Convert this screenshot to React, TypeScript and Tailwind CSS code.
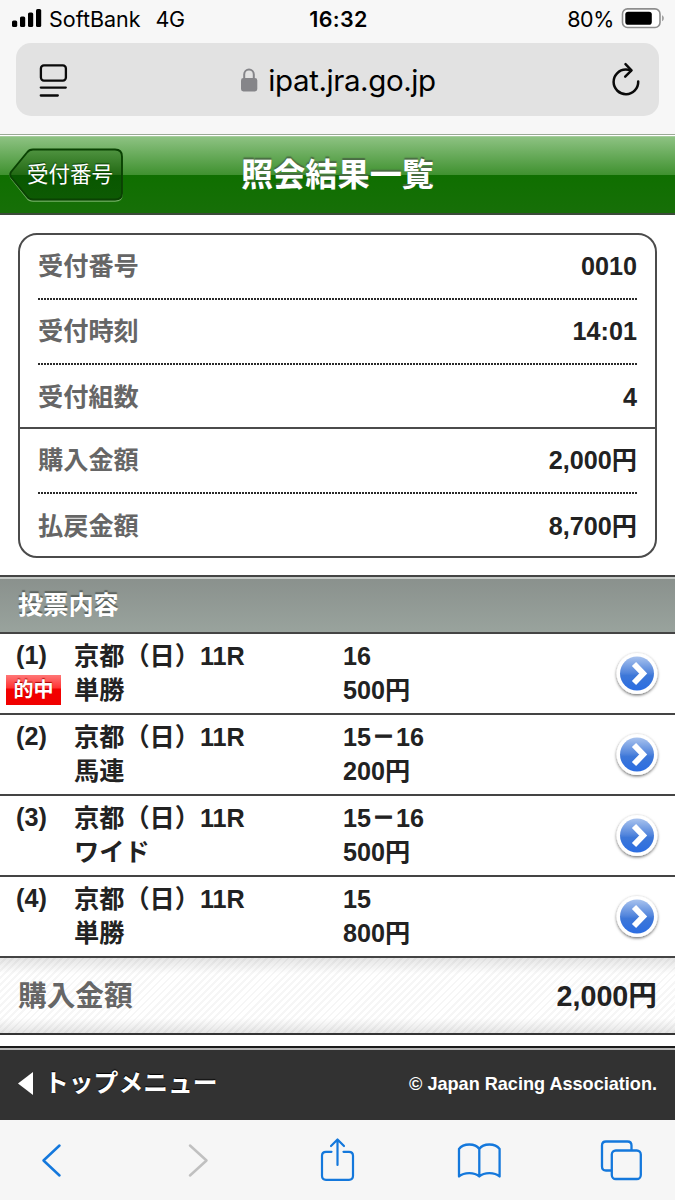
import type { ReactNode } from 'react'

type Bet = {
  no: number
  race: string
  kind: string
  pick: string[]
  amount: string
  hit?: boolean
}

const receipt = [
  { label: '受付番号', value: '0010' },
  { label: '受付時刻', value: '14:01' },
  { label: '受付組数', value: '4' },
]

const money = [
  { label: '購入金額', value: '2,000円' },
  { label: '払戻金額', value: '8,700円' },
]

const bets: Bet[] = [
  { no: 1, race: '京都（日）11R', kind: '単勝', pick: ['16'], amount: '500円', hit: true },
  { no: 2, race: '京都（日）11R', kind: '馬連', pick: ['15', '16'], amount: '200円' },
  { no: 3, race: '京都（日）11R', kind: 'ワイド', pick: ['15', '16'], amount: '500円' },
  { no: 4, race: '京都（日）11R', kind: '単勝', pick: ['15'], amount: '800円' },
]

function StatusBar() {
  return (
    <div className="grid h-[43px] grid-cols-[1fr_auto_1fr] items-center pr-[10px] pb-[6px] pl-3 font-['Inter',sans-serif] text-[21.5px] leading-6 text-black">
      <div className="flex items-center">
        <svg className="mr-[7px] h-5 w-[30px]" viewBox="0 0 30 20" aria-hidden>
          <rect x="0" y="11.5" width="5.2" height="6.5" rx="1.6" />
          <rect x="8" y="7.5" width="5.2" height="10.5" rx="1.6" />
          <rect x="16" y="3.5" width="5.2" height="14.5" rx="1.6" />
          <rect x="24" y="0" width="5.2" height="18" rx="1.6" />
        </svg>
        <span>SoftBank</span>
        <span className="ml-[15px] tracking-[-0.5px]">4G</span>
      </div>
      <span className="font-semibold tracking-[0.3px]">16:32</span>
      <div className="flex items-center justify-end">
        <span className="mr-[7px] tracking-[-0.4px]">80%</span>
        <svg className="h-[22px] w-[44px]" viewBox="0 0 44 22" aria-hidden>
          <rect x="1.5" y="0.9" width="37.5" height="18.6" rx="5" fill="#fff" stroke="#8e8e8e" strokeWidth="1.6" />
          <rect x="4.3" y="3.7" width="26.5" height="13" rx="2.8" />
          <path d="M41.2 7.2c2 1 2 5 0 6z" fill="#8e8e8e" />
        </svg>
      </div>
    </div>
  )
}

function AddressBar() {
  return (
    <div className="mx-4 flex h-[73px] items-center justify-between rounded-[15px] bg-[#e2e2e2] pr-[17px] pl-[22px]">
      <svg className="h-[36px] w-[30px]" viewBox="0 0 30 36" fill="none" stroke="#0a0a0a" strokeWidth="2.3" strokeLinecap="round" aria-hidden>
        <rect x="2.9" y="3.4" width="25" height="15.2" rx="3" />
        <path d="M2.8 25.6h25M2.8 33.5h17" />
      </svg>
      <div className="flex items-center">
        <svg className="mr-[10px] -ml-[2px] h-6 w-[18px]" viewBox="0 0 18 24" aria-hidden>
          <path d="M4.2 11V6.4a4.8 4.8 0 0 1 9.6 0V11" fill="none" stroke="#858589" strokeWidth="2" />
          <rect x="1" y="10" width="16.3" height="13.4" rx="2.4" fill="#858589" />
        </svg>
        <span className="font-['Inter',sans-serif] text-[29.5px] leading-9 tracking-[-0.4px] text-black">ipat.jra.go.jp</span>
      </div>
      <svg className="h-[36px] w-[32px]" viewBox="0 0 32 36" fill="none" stroke="#0a0a0a" strokeWidth="2.5" strokeLinecap="round" strokeLinejoin="round" aria-hidden>
        <path d="M28.2 19.5A12.3 12.3 0 1 1 15.8 7.6c2 0 3.6.2 5.2.8" />
        <path d="M15.5 2.2 21.5 8.3 15.2 14.6" />
      </svg>
    </div>
  )
}

function BackButton({ children }: { children: ReactNode }) {
  return (
    <button className="relative ml-[9px] flex h-[56px] w-[115px] items-center pl-[18px]">
      <svg className="absolute inset-0 h-[56px] w-[115px]" viewBox="0 0 115 56" aria-hidden>
        <defs>
          <linearGradient id="back" x1="0" y1="0" x2="0" y2="1">
            <stop offset="0" stopColor="#4f9340" />
            <stop offset="0.5" stopColor="#236a14" />
            <stop offset="0.51" stopColor="#085700" />
            <stop offset="1" stopColor="#0d5a03" />
          </linearGradient>
        </defs>
        <path d="M24 4h82q7 0 7 7v37q0 6-7 6H24q-4 0-6-3L2 31q-1.5-2.500 0-5L18 7q2-3 6-3z" fill="none" stroke="#8cc07e" strokeOpacity=".8" strokeWidth="1.4" />
        <path d="M24 2.500h82q7 0 7 7v37q0 6-7 6H24q-4 0-6-3L2 30q-1.500-2.500 0-5L18 5.500q2-3 6-3z" fill="url(#back)" stroke="#0a4203" strokeWidth="1.9" />
      </svg>
      <span className="relative text-[21.5px] leading-6 text-white [text-shadow:0_-1px_1px_#063c00]">{children}</span>
    </button>
  )
}

function PageHeader() {
  return (
    <header className="h-[81px] border-t border-b-2 border-t-[#9aaa95] border-b-[#3c4a3a] bg-white pt-px">
      <div className="grid h-[77px] grid-cols-[1fr_auto_1fr] items-center border-t border-[#a5cc9c] bg-[linear-gradient(#8dc282_0,#3f912f_38px,#0f6f00_38px,#176f08_100%)]">
        <BackButton>受付番号</BackButton>
        <h1 className="text-[32.2px] leading-10 font-bold text-white [text-shadow:0_-2px_1px_#4a6b44]">照会結果一覧</h1>
      </div>
    </header>
  )
}

function SummaryRow({ label, value }: { label: string; value: string }) {
  return (
    <div className="mx-[18px] flex h-[65px] items-center justify-between bg-[repeating-linear-gradient(90deg,#2a2a2a_0_1.6px,transparent_1.6px_3px)] bg-[length:100%_2px] bg-bottom bg-no-repeat pb-[3px] last:h-[63px] last:bg-none last:pb-0">
      <dt className="text-[#666]">{label}</dt>
      <dd>{value}</dd>
    </div>
  )
}

function Summary() {
  return (
    <div className="mx-[18px] mt-[18px] h-[325px] rounded-[19px] border-2 border-[#4b4b4b] text-[25.2px] leading-[30px] font-bold">
      <dl className="h-[194px] border-b-2 border-[#4b4b4b]">
        {receipt.map((row) => (
          <SummaryRow key={row.label} label={row.label} value={row.value} />
        ))}
      </dl>
      <dl>
        {money.map((row) => (
          <SummaryRow key={row.label} label={row.label} value={row.value} />
        ))}
      </dl>
    </div>
  )
}

function DetailButton() {
  return (
    <svg className="h-[50px] w-[50px]" viewBox="0 0 50 50" aria-label="詳細">
      <defs>
        <linearGradient id="disc" x1="0" y1="0" x2="0" y2="1">
          <stop offset="0" stopColor="#a9c3ee" />
          <stop offset="0.48" stopColor="#5285dc" />
          <stop offset="0.56" stopColor="#3d77d8" />
          <stop offset="1" stopColor="#2b6de2" />
        </linearGradient>
        <filter id="drop" x="-20%" y="-20%" width="140%" height="140%">
          <feDropShadow dx="0" dy="1.2" stdDeviation="1.5" floodColor="#000" floodOpacity=".6" />
        </filter>
      </defs>
      <circle cx="25" cy="24.5" r="20.5" fill="#fff" filter="url(#drop)" />
      <circle cx="25" cy="24.5" r="17" fill="url(#disc)" />
      <path d="M22 14.900 31.200 24.500 22 34.100" fill="none" stroke="#fff" strokeWidth="5.8" />
    </svg>
  )
}

function Pick({ numbers }: { numbers: string[] }) {
  return (
    <span className="flex h-[34px]">
      {numbers.map((n, i) => (
        <span key={n} className="flex">
          {i > 0 && <span className="w-[25px] text-center text-[22px] [-webkit-text-stroke:1.2px_#222]">－</span>}
          {n}
        </span>
      ))}
    </span>
  )
}

function BetRow({ bet }: { bet: Bet }) {
  return (
    <li className="flex h-[81px] items-start border-b-2 border-[#444] pt-[5px] pr-[13px] text-[25.2px] leading-[34px] font-bold">
      <div className="flex w-[74px] flex-col pl-[6px]">
        <span className="h-[34px] pl-[10px] leading-[32px]">({bet.no})</span>
        {bet.hit && (
          <span className="mt-[2px] flex h-[30px] w-[55px] items-center justify-center bg-[linear-gradient(#f77_0,#f33_13px,#f30000_14px,#f00000_100%)] text-[20px] leading-6 text-white [text-shadow:0_-1px_1px_#a00]">
            的中
          </span>
        )}
      </div>
      <div className="flex w-[269px] flex-col">
        <span>{bet.race}</span>
        <span>{bet.kind}</span>
      </div>
      <div className="flex flex-1 flex-col">
        <Pick numbers={bet.pick} />
        <span>{bet.amount}</span>
      </div>
      <div className="pt-[10px]">
        <DetailButton />
      </div>
    </li>
  )
}

function Toolbar() {
  return (
    <nav className="grid h-20 grid-cols-[144px_141px_140px_142px_48px] items-center bg-[#f6f6f6] px-[30px] text-[#1478dc]">
      <svg className="h-[50px] w-[44px]" viewBox="30 1135 44 50" fill="none" stroke="currentColor" strokeWidth="2.5" strokeLinecap="round" strokeLinejoin="round" aria-hidden>
        <path d="M59.5 1145.500 43.500 1160.500 59.500 1175.500" />
      </svg>
      <svg className="h-[50px] w-[44px]" viewBox="174 1135 44 50" fill="none" stroke="#c0c0c0" strokeWidth="2.5" strokeLinecap="round" strokeLinejoin="round" aria-hidden>
        <path d="M190 1145.500 206.500 1160.500 190 1175.500" />
      </svg>
      <svg className="h-[50px] w-[44px]" viewBox="315 1135 44 50" fill="none" stroke="currentColor" strokeWidth="2.2" strokeLinecap="round" strokeLinejoin="round" aria-hidden>
        <path d="M331.500 1151.800H326q-4 0-4 4v20q0 4 4 4h23q4 0 4-4v-20q0-4-4-4h-5.500M337.500 1165v-25M331 1146l6.500-6.500 6.500 6.500" />
      </svg>
      <svg className="h-[50px] w-[48px]" viewBox="455 1135 48 50" fill="none" stroke="currentColor" strokeWidth="2.3" strokeLinecap="round" strokeLinejoin="round" aria-hidden>
        <path d="M479.300 1149c-4-6-16-6-20.300 0v27.500c5-4.500 15.500-4.500 20.300 0 4.800-4.500 15.300-4.500 20.300 0V1149c-4.300-6-16.300-6-20.300 0v27.500" />
      </svg>
      <svg className="h-[50px] w-[48px]" viewBox="597 1135 48 50" fill="none" stroke="currentColor" strokeWidth="2.3" strokeLinejoin="round" aria-hidden>
        <rect x="611.8" y="1150.5" width="29" height="28.5" rx="4" />
        <path d="M611 1170.500h-5q-4 0-4-4v-21q0-4 4-4h21.500q4 0 4 4v5" />
      </svg>
    </nav>
  )
}

export default function App() {
  return (
    <div className="flex h-[1200px] w-[675px] flex-col overflow-hidden bg-white font-['Liberation_Sans','Noto_Sans_CJK_JP',sans-serif] text-[#222]" lang="ja">
      <div className="h-[134px] shrink-0 bg-[#f7f7f7]">
        <StatusBar />
        <AddressBar />
      </div>
      <PageHeader />
      <main className="flex-1">
        <Summary />
        <h2 className="mt-[17px] flex h-[59px] items-center border-t-2 border-b-2 border-[#444] bg-[linear-gradient(#c4c8c5_0_2px,#8a918d_2px,#99a39d_100%)] pl-[18px] text-[25.2px] leading-[30px] font-bold text-white [text-shadow:0_-2px_1px_#5b625e]">
          投票内容
        </h2>
        <ul>
          {bets.map((bet) => (
            <BetRow key={bet.no} bet={bet} />
          ))}
        </ul>
        <div className="flex h-[77px] items-center justify-between border-b-2 border-[#333] bg-[linear-gradient(#0000001a,transparent_16px,transparent_60px,#0000001a),repeating-linear-gradient(135deg,#fff_0_3px,#f6f6f6_3px_5px)] px-[18px] pt-px text-[28.7px] leading-9 font-bold">
          <span className="text-[#666]">購入金額</span>
          <span>2,000円</span>
        </div>
      </main>
      <footer className="flex h-[74px] shrink-0 items-center justify-between border-t-2 border-[#1a1a1a] bg-[linear-gradient(#b5b5b5_0_2px,#323232_2px)] px-[18px] font-bold text-white">
        <span className="flex items-center text-[24.8px] leading-8 [text-shadow:0_-1px_1px_#000]">
          <svg className="mr-[11px] h-[24px] w-[15px]" viewBox="0 0 15 24" fill="#fff" aria-hidden>
            <path d="M0 11.5 15 0v23z" />
          </svg>
          トップメニュー
        </span>
        <small className="text-[18.1px] leading-6">© Japan Racing Association.</small>
      </footer>
      <Toolbar />
    </div>
  )
}
